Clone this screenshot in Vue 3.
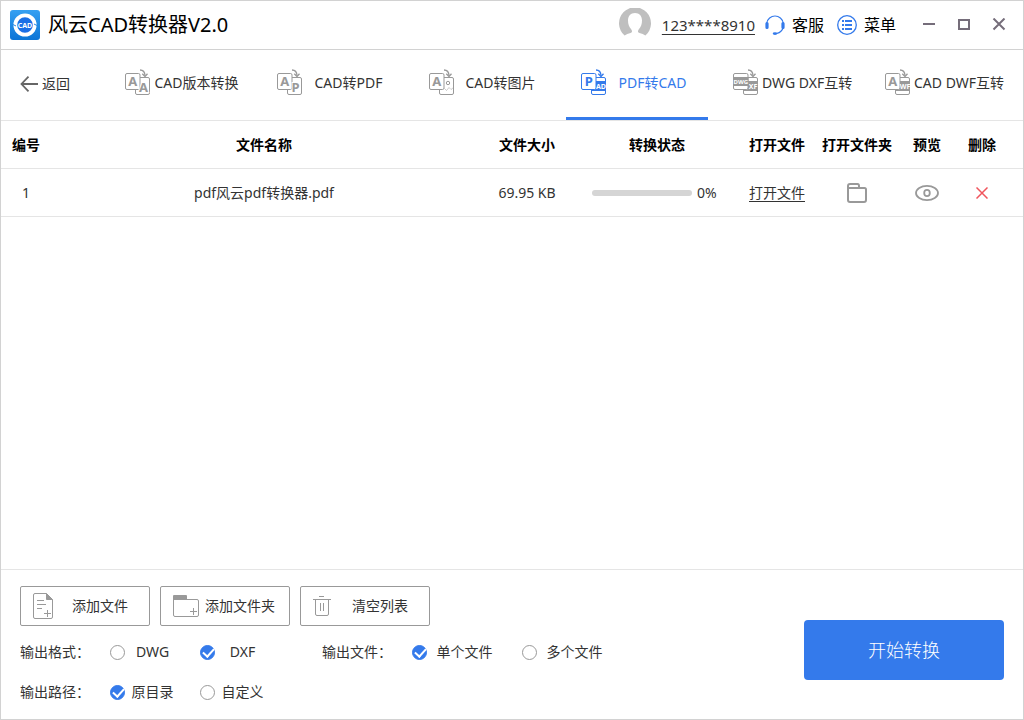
<script setup>
import { ref } from 'vue'

const tabs = [
  { label: 'CAD版本转换', front: 'A', back: 'A', kind: 'letter' },
  { label: 'CAD转PDF', front: 'A', back: 'P', kind: 'letter' },
  { label: 'CAD转图片', front: 'A', back: '', kind: 'image' },
  { label: 'PDF转CAD', front: 'P', back: 'AD', kind: 'band' },
  { label: 'DWG DXF互转', front: 'DWG', back: 'XF', kind: 'band' },
  { label: 'CAD DWF互转', front: 'A', back: 'WF', kind: 'band' },
]
const activeTab = ref(3)

const files = ref([{ id: 1, name: 'pdf风云pdf转换器.pdf', size: '69.95 KB', progress: 0 }])

const format = ref('DXF')
const output = ref('单个文件')
const path = ref('原目录')

function removeFile(id) {
  files.value = files.value.filter((f) => f.id !== id)
}
</script>

<template>
  <div class="window">
    <header class="titlebar">
      <svg class="logo" width="30" height="30" viewBox="0 0 30 30">
        <defs>
          <linearGradient id="logo-bg" x1="0" y1="0" x2="0" y2="1">
            <stop offset="0" stop-color="#35a0f2" />
            <stop offset="1" stop-color="#0b74d6" />
          </linearGradient>
        </defs>
        <rect width="30" height="30" rx="3" fill="url(#logo-bg)" />
        <circle cx="15" cy="15" r="9.7" fill="#1b6fe6" stroke="#fff" stroke-width="3.800" />
        <path d="M3 14.500l3 1.500M24 14l3 1.500" stroke="#2787e6" stroke-width="1" />
        <text x="15" y="17.600" text-anchor="middle" font-size="7" font-weight="700" fill="#fff">CAD</text>
      </svg>
      <h1>风云CAD转换器V2.0</h1>
      <div class="account">
        <svg width="32" height="32" viewBox="0 0 32 32">
          <path
            d="M5.600 27.500A16 16 0 1 1 26.400 27.500Q24 25.500 20.500 25C18.500 24.500 18.600 22.600 20 21C22 18.800 23 16 23 12.500C23 8 20.500 5 16 5S9 8 9 12.500C9 16 10 18.800 12 21C13.400 22.600 13.500 24.500 11.500 25Q8 25.500 5.600 27.500Z"
            fill="#bfbfbf"
          />
        </svg>
        <a class="phone" href="#">123****8910</a>
      </div>
      <button class="tool service">
        <svg width="20" height="20" viewBox="0 0 20 20" fill="none" stroke="#347aeb">
          <path d="M1.800 8A8.300 8.300 0 0 1 18.200 8M18.200 12.500A8.500 8.500 0 0 1 12 18.300" stroke-width="1.200" />
          <path d="M2 8.500v4M18 8.500v4" stroke-width="3.200" stroke-linecap="round" />
          <ellipse cx="10" cy="18.600" rx="2.300" ry="1.300" fill="#347aeb" stroke="none" />
        </svg>
        <span>客服</span>
      </button>
      <button class="tool menu">
        <svg width="20" height="20" viewBox="0 0 20 20" fill="none" stroke="#347aeb">
          <circle cx="10" cy="10" r="9.300" stroke-width="1.300" />
          <path d="M5 6h2M5 10h2M5 14h2M8 6h7M8 10h7M8 14h7" stroke-width="1.800" />
        </svg>
        <span>菜单</span>
      </button>
      <div class="controls">
        <button aria-label="最小化">
          <svg width="14" height="14" viewBox="0 0 14 14"><path d="M1 6h12" stroke="#756d7a" stroke-width="2" /></svg>
        </button>
        <button aria-label="最大化">
          <svg width="14" height="14" viewBox="0 0 14 14"><path d="M2 2h10v9H2z" fill="none" stroke="#756d7a" stroke-width="2" /></svg>
        </button>
        <button aria-label="关闭">
          <svg width="14" height="14" viewBox="0 0 14 14"><path d="M1.500 0.500l11 11M12.500 0.500l-11 11" stroke="#756d7a" stroke-width="2" /></svg>
        </button>
      </div>
    </header>

    <nav class="nav">
      <button class="back">
        <svg width="18" height="16" viewBox="0 0 18 16" fill="none" stroke="#666" stroke-width="1.800">
          <path d="M18 8H1.500M8.500 0.700L1.500 8l7 7.300" />
        </svg>
        <span>返回</span>
      </button>
      <div class="tabs">
        <button
          v-for="(tab, i) in tabs"
          :key="tab.label"
          class="tab"
          :class="{ active: i === activeTab }"
          @click="activeTab = i"
        >
          <svg class="tab-icon" width="26" height="27" viewBox="0 0 26 27" fill="none" stroke="currentColor">
            <path d="M15 1C18 1 19.800 3 20 6.500" stroke-width="1.300" />
            <path d="M17.300 4.800L20 7.500L22.500 4.800" stroke-width="1.300" />
            <rect x="10.500" y="8.500" width="14" height="17" rx="1.500" />
            <path v-if="tab.kind === 'band'" d="M10.500 12.500h14v9h-14z" fill="currentColor" />
            <rect x="0.500" y="4.500" width="14.500" height="16" rx="1.500" fill="#fff" />
            <template v-if="tab.kind === 'image'">
              <circle cx="19" cy="14" r="1.700" />
              <path d="M15.500 19.500l2 2 2.500-3 2 2 2.500-2" stroke-opacity="0.500" />
            </template>
            <text v-else-if="tab.kind === 'letter'" class="glyph halo" x="18.500" y="22.500" font-size="13">{{ tab.back }}</text>
            <text v-else class="glyph knock" x="20" y="20" font-size="7">{{ tab.back }}</text>
            <template v-if="tab.front === 'DWG'">
              <path d="M0.500 8.500h14.500v8H0.500z" fill="currentColor" />
              <text class="glyph knock" x="7.800" y="14.800" font-size="6">DWG</text>
            </template>
            <text v-else class="glyph" x="7.800" y="17" font-size="13">{{ tab.front }}</text>
          </svg>
          <span>{{ tab.label }}</span>
        </button>
      </div>
    </nav>

    <main class="list">
      <table>
        <colgroup>
          <col class="c50" />
          <col />
          <col class="c100" />
          <col class="c160" />
          <col class="c80" />
          <col class="c80" />
          <col class="c60" />
          <col class="c50" />
          <col class="c16" />
        </colgroup>
        <thead>
          <tr>
            <th>编号</th>
            <th>文件名称</th>
            <th>文件大小</th>
            <th>转换状态</th>
            <th>打开文件</th>
            <th>打开文件夹</th>
            <th>预览</th>
            <th>删除</th>
            <td></td>
          </tr>
        </thead>
        <tbody>
          <tr v-for="file in files" :key="file.id">
            <td>{{ file.id }}</td>
            <td>{{ file.name }}</td>
            <td>{{ file.size }}</td>
            <td>
              <div class="status">
                <div class="bar"><i :style="{ width: file.progress + '%' }"></i></div>
                <span>{{ file.progress }}%</span>
              </div>
            </td>
            <td><a href="#">打开文件</a></td>
            <td>
              <button class="icon" aria-label="打开文件夹">
                <svg width="20" height="20" viewBox="0 0 20 20" fill="none" stroke="#999" stroke-width="2">
                  <path d="M1 17V3Q1 1 3 1H10.500Q12 1 12 3V5H17.500Q19 5 19 6.500V17Q19 19 17 19H3Q1 19 1 17ZM1 5H12" />
                </svg>
              </button>
            </td>
            <td>
              <button class="icon" aria-label="预览">
                <svg width="24" height="18" viewBox="0 0 24 18" fill="none" stroke="#999" stroke-width="1.800">
                  <ellipse cx="12" cy="9" rx="11" ry="7.200" />
                  <ellipse cx="12" cy="9" rx="2.800" ry="3.200" />
                </svg>
              </button>
            </td>
            <td>
              <button class="icon" aria-label="删除" @click="removeFile(file.id)">
                <svg width="12" height="12" viewBox="0 0 12 12">
                  <path d="M0.500 0.500l11 11M11.500 0.500l-11 11" stroke="#f0555d" stroke-width="1.500" />
                </svg>
              </button>
            </td>
            <td></td>
          </tr>
        </tbody>
      </table>
    </main>

    <footer class="footer">
      <div class="settings">
        <div class="actions">
          <button class="action">
            <svg width="20" height="26" viewBox="0 0 20 26" fill="none" stroke="#999">
              <path d="M13.500 0.500H2Q0.500 0.500 0.500 2V24Q0.500 25.500 2 25.500H18Q19.500 25.500 19.500 24V6.500" />
              <path d="M13.500 0.500V6.500H19.500Z" fill="#999" />
              <path d="M4 7.500h7M4 11.500h9M4 15.500h5M11 20.500h7M14.500 17v7" />
            </svg>
            <span>添加文件</span>
          </button>
          <button class="action">
            <svg class="wide" width="26" height="22" viewBox="0 0 26 22" fill="none" stroke="#999">
              <path d="M0.500 4.500H24Q25.500 4.500 25.500 6V20Q25.500 21.500 24 21.500H2Q0.500 21.500 0.500 20Z" />
              <path d="M0 1Q0 0 1 0H13Q14 0 14 1V5H0Z" fill="#999" stroke="none" />
              <path d="M17 16.500h7M20.500 13v7" />
            </svg>
            <span>添加文件夹</span>
          </button>
          <button class="action">
            <svg class="bin" width="18" height="20" viewBox="0 0 18 20" fill="none" stroke="#999">
              <path d="M6 0.500h5M0 3.500h18M2.500 3.500V18Q2.500 19.500 4 19.500H14Q15.500 19.500 15.500 18V3.500M7.500 7v8M10.500 7v8" />
            </svg>
            <span>清空列表</span>
          </button>
        </div>
        <div class="row">
          <div class="group" role="radiogroup" aria-label="输出格式">
            <span class="caption">输出格式：</span>
            <label v-for="o in ['DWG', 'DXF']" :key="o" class="option">
              <input v-model="format" type="radio" name="format" :value="o" /><span>{{ o }}</span>
            </label>
          </div>
          <div class="group second" role="radiogroup" aria-label="输出文件">
            <span class="caption">输出文件：</span>
            <label v-for="o in ['单个文件', '多个文件']" :key="o" class="option large">
              <input v-model="output" type="radio" name="output" :value="o" /><span>{{ o }}</span>
            </label>
          </div>
        </div>
        <div class="row">
          <div class="group" role="radiogroup" aria-label="输出路径">
            <span class="caption">输出路径：</span>
            <label v-for="o in ['原目录', '自定义']" :key="o" class="option">
              <input v-model="path" type="radio" name="path" :value="o" /><span>{{ o }}</span>
            </label>
          </div>
        </div>
      </div>
      <button class="start">开始转换</button>
    </footer>
  </div>
</template>

<style>
body {
  margin: 0;
  background: #fff;
}
</style>

<style scoped>
.window {
  box-sizing: border-box;
  min-height: 100vh;
  display: flex;
  flex-direction: column;
  border: 1px solid #d2d2d2;
  background: #fff;
  color: #333;
  font: 14px/20px "Noto Sans", "Noto Sans CJK SC", sans-serif;
}
.window * {
  box-sizing: border-box;
}
svg {
  display: block;
  flex: none;
}
button {
  display: flex;
  align-items: center;
  padding: 0;
  border: 0;
  background: none;
  color: inherit;
  font: inherit;
  white-space: nowrap;
  cursor: pointer;
}
a {
  color: inherit;
  text-underline-offset: 3px;
}

.titlebar {
  display: flex;
  align-items: center;
  height: 49px;
  padding: 0 17px 0 9px;
  border-bottom: 1px solid #d2d2d2;
  color: #000;
}
h1 {
  flex: 1;
  margin: 0 0 0 8px;
  font-size: 20px;
  font-weight: 400;
  line-height: 28px;
}
.account {
  display: flex;
  align-items: center;
  gap: 11px;
  color: #333;
}
.account svg {
  margin-bottom: 2px;
}
.phone {
  font-size: 15px;
}
.tool {
  gap: 7px;
  font-size: 16px;
}
.service {
  margin-left: 10px;
}
.menu {
  margin-left: 13px;
}
.controls {
  display: flex;
  gap: 21px;
  margin-left: 26px;
}

.nav {
  display: flex;
  height: 71px;
  padding-right: 11px;
  border-bottom: 1px solid #e5e5e5;
}
.back {
  width: 109px;
  padding-left: 19px;
  padding-bottom: 3px;
  gap: 4px;
}
.tabs {
  flex: 1;
  display: grid;
  grid-template-columns: repeat(6, 1fr);
  gap: 10px;
}
.tab {
  min-width: 0;
  gap: 3px;
  padding: 0 13px 2px 15px;
  border-bottom: 3px solid transparent;
}
.tab span {
  flex: 1;
  min-width: 0;
}
.tab-icon {
  margin-bottom: 1px;
  color: #999;
}
.tab.active {
  color: #347aeb;
  border-bottom-color: #347aeb;
}
.tab.active .tab-icon {
  color: #347aeb;
}
.glyph {
  fill: currentColor;
  stroke: none;
  font-weight: 700;
  text-anchor: middle;
}
.halo {
  stroke: #fff;
  stroke-width: 2px;
  paint-order: stroke;
}
.knock {
  fill: #fff;
}

.list {
  flex: 1;
}
table {
  width: 100%;
  table-layout: fixed;
  border-collapse: separate;
  border-spacing: 0;
}
.c16 { width: 16px; }
.c50 { width: 50px; }
.c60 { width: 60px; }
.c80 { width: 80px; }
.c100 { width: 100px; }
.c160 { width: 160px; }
th,
td {
  height: 48px;
  padding: 0;
  border-bottom: 1px solid #e5e5e5;
  text-align: center;
  white-space: nowrap;
}
th {
  color: #000;
  font-weight: 700;
}
.status {
  display: flex;
  align-items: center;
  padding-left: 15px;
  gap: 5px;
}
.bar {
  width: 100px;
  height: 6px;
  border-radius: 3px;
  background: #d5d5d5;
  overflow: hidden;
}
.bar i {
  display: block;
  height: 100%;
  background: #347aeb;
}
.icon {
  margin: 0 auto;
}

.footer {
  display: flex;
  align-items: flex-end;
  justify-content: space-between;
  padding: 0 19px;
  border-top: 1px solid #e5e5e5;
}
.settings {
  padding: 16px 0 7px;
}
.actions {
  display: flex;
  gap: 10px;
  margin-bottom: 6px;
}
.action {
  width: 130px;
  height: 40px;
  padding: 0 12px;
  border: 1px solid #999;
  border-radius: 2px;
}
.action span {
  flex: 1;
  padding-left: 10px;
}
.action .wide + span {
  padding-left: 4px;
}
.action .bin {
  margin-right: 2px;
}
.row,
.group {
  display: flex;
  align-items: center;
}
.row {
  height: 40px;
}
.group {
  gap: 20px;
}
.second {
  margin-left: 52px;
}
.caption {
  width: 70px;
  white-space: nowrap;
}
.option {
  display: flex;
  align-items: center;
  width: 70px;
}
.large {
  width: 90px;
}
.option span {
  flex: 1;
  text-align: center;
  white-space: nowrap;
}
input {
  appearance: none;
  position: relative;
  width: 15px;
  height: 15px;
  margin: 0;
  border: 1px solid #999;
  border-radius: 50%;
  background: #fff;
}
input:checked {
  border-color: #347aeb;
  background: #347aeb;
}
input:checked::after {
  content: "";
  position: absolute;
  left: 2px;
  top: 2px;
  width: 9px;
  height: 5px;
  border: solid #fff;
  border-width: 0 0 2px 2px;
  transform: rotate(-48deg);
}
.start {
  justify-content: center;
  width: 200px;
  height: 60px;
  margin-bottom: 39px;
  border-radius: 4px;
  background: #347aeb;
  color: #fff;
  font-size: 18px;
  font-weight: 300;
}
</style>
